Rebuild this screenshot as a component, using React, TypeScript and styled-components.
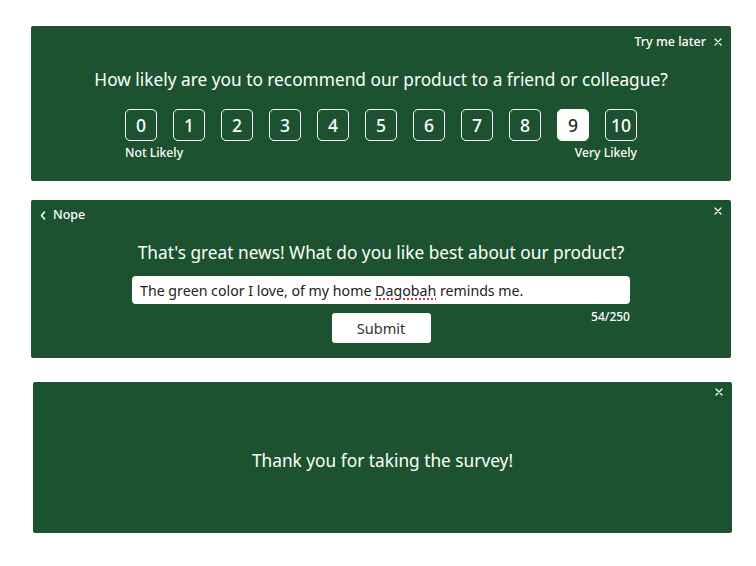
import React from 'react';
import styled, { createGlobalStyle } from 'styled-components';

const GREEN = '#1c5230';
const FONT = '"Noto Sans", "Open Sans", sans-serif';

const Global = createGlobalStyle`
  html, body { margin: 0; padding: 0; background: #fff; }
  body { font-family: ${FONT}; color: #fff; }
  svg { display: block; }
`;

const Page = styled.div`
  width: 756px;
  height: 566px;
  padding-top: 26px;
  box-sizing: border-box;
  display: flex;
  flex-direction: column;
`;

const Panel = styled.section<{ $h: number; $mt: number; $ml: number; $w: number }>`
  margin: ${(p) => p.$mt}px 0 0 ${(p) => p.$ml}px;
  width: ${(p) => p.$w}px;
  height: ${(p) => p.$h}px;
  background: ${GREEN};
  border-radius: 2px;
  display: flex;
  flex-direction: column;
  align-items: center;
  box-sizing: border-box;
`;

const TopBar = styled.div<{ $mt: number; $between?: boolean }>`
  align-self: stretch;
  margin-top: ${(p) => p.$mt}px;
  padding: 0 9px 0 9px;
  height: 16px;
  display: flex;
  align-items: center;
  justify-content: ${(p) => (p.$between ? 'space-between' : 'flex-end')};
  gap: 8px;
`;

const SmallLink = styled.span`
  font-size: 12.5px;
  font-weight: 500;
  line-height: 16px;
  color: #fff;
  display: flex;
  align-items: center;
  gap: 7px;
`;

const CloseBtn = styled.span<{ $dy?: number }>`
  width: 8px;
  height: 8px;
  display: block;
  line-height: 0;
  transform: translateY(${(p) => p.$dy ?? 0}px);
`;

const Heading = styled.h2<{ $mt: number }>`
  margin: ${(p) => p.$mt}px 0 0;
  font-size: 17.3px;
  font-weight: 400;
  line-height: 24px;
  color: #fff;
  text-align: center;
  white-space: nowrap;
`;

const Scale = styled.div`
  margin-top: 17px;
  display: flex;
  gap: 16px;
`;

const ScoreBox = styled.button<{ $active?: boolean }>`
  width: 32px;
  height: 32px;
  box-sizing: border-box;
  border: 1px solid #fff;
  border-radius: 5px;
  background: ${(p) => (p.$active ? '#fff' : 'transparent')};
  color: ${(p) => (p.$active ? '#2b2b2b' : '#fff')};
  font-family: ${FONT};
  font-size: 17.5px;
  font-weight: 500;
  padding: 0;
  display: flex;
  align-items: center;
  justify-content: center;
`;

const Labels = styled.div`
  width: 512px;
  margin-top: 4px;
  display: flex;
  justify-content: space-between;
  font-size: 12.2px;
  font-weight: 500;
  line-height: 16px;
`;

const TextField = styled.div`
  margin-top: 11px;
  width: 498px;
  height: 28px;
  box-sizing: border-box;
  background: #fff;
  border-radius: 4px;
  padding: 0 8px;
  display: flex;
  align-items: center;
  color: #222;
  font-size: 14.2px;
  white-space: nowrap;
`;

const Misspelled = styled.span`
  text-decoration: underline dotted #d23c3c;
  text-decoration-thickness: 1.5px;
  text-underline-offset: 3px;
`;

const SubmitRow = styled.div`
  margin-top: 9px;
  width: 498px;
  display: grid;
  grid-template-columns: 1fr auto 1fr;
  align-items: start;
`;

const SubmitBtn = styled.button`
  grid-column: 2;
  width: 99px;
  height: 30px;
  background: #fff;
  border: none;
  border-radius: 3px;
  color: #333;
  font-family: ${FONT};
  font-size: 14.5px;
  padding: 0;
`;

const Counter = styled.span`
  grid-column: 3;
  justify-self: end;
  margin-top: -4px;
  font-size: 12px;
  font-weight: 500;
  line-height: 16px;
`;

const Thanks = styled.p`
  margin: 49px 0 0;
  font-size: 17.3px;
  line-height: 24px;
  color: #fff;
`;

const Cross = () => (
  <svg width="8" height="8" viewBox="0 0 8 8" fill="none" stroke="#fff" strokeWidth="1.2" strokeLinecap="round">
    <path d="M1 1L7 7M7 1L1 7" />
  </svg>
);

const Chevron = () => (
  <svg width="6" height="9" viewBox="0 0 6 9" fill="none" stroke="#fff" strokeWidth="1.6" strokeLinecap="round" strokeLinejoin="round">
    <path d="M4.5 1L1.5 4.5L4.5 8" />
  </svg>
);

export default function App() {
  const scores = Array.from({ length: 11 }, (_, i) => i);
  return (
    <>
      <Global />
      <Page>
        <Panel $mt={0} $ml={31} $w={700} $h={155}>
          <TopBar $mt={8}>
            <SmallLink>Try me later</SmallLink>
            <CloseBtn>
              <Cross />
            </CloseBtn>
          </TopBar>
          <Heading $mt={18}>How likely are you to recommend our product to a friend or colleague?</Heading>
          <Scale>
            {scores.map((s) => (
              <ScoreBox key={s} $active={s === 9}>
                {s}
              </ScoreBox>
            ))}
          </Scale>
          <Labels>
            <span>Not Likely</span>
            <span>Very Likely</span>
          </Labels>
        </Panel>

        <Panel $mt={19} $ml={31} $w={700} $h={158}>
          <TopBar $mt={7} $between>
            <SmallLink>
              <Chevron />
              Nope
            </SmallLink>
            <CloseBtn $dy={-4}>
              <Cross />
            </CloseBtn>
          </TopBar>
          <Heading $mt={18}>That's great news! What do you like best about our product?</Heading>
          <TextField>
            The green color I love, of my home&nbsp;<Misspelled>Dagobah</Misspelled>&nbsp;reminds me.
          </TextField>
          <SubmitRow>
            <SubmitBtn>Submit</SubmitBtn>
            <Counter>54/250</Counter>
          </SubmitRow>
        </Panel>

        <Panel $mt={24} $ml={33} $w={699} $h={151}>
          <TopBar $mt={2}>
            <CloseBtn>
              <Cross />
            </CloseBtn>
          </TopBar>
          <Thanks>Thank you for taking the survey!</Thanks>
        </Panel>
      </Page>
    </>
  );
}
